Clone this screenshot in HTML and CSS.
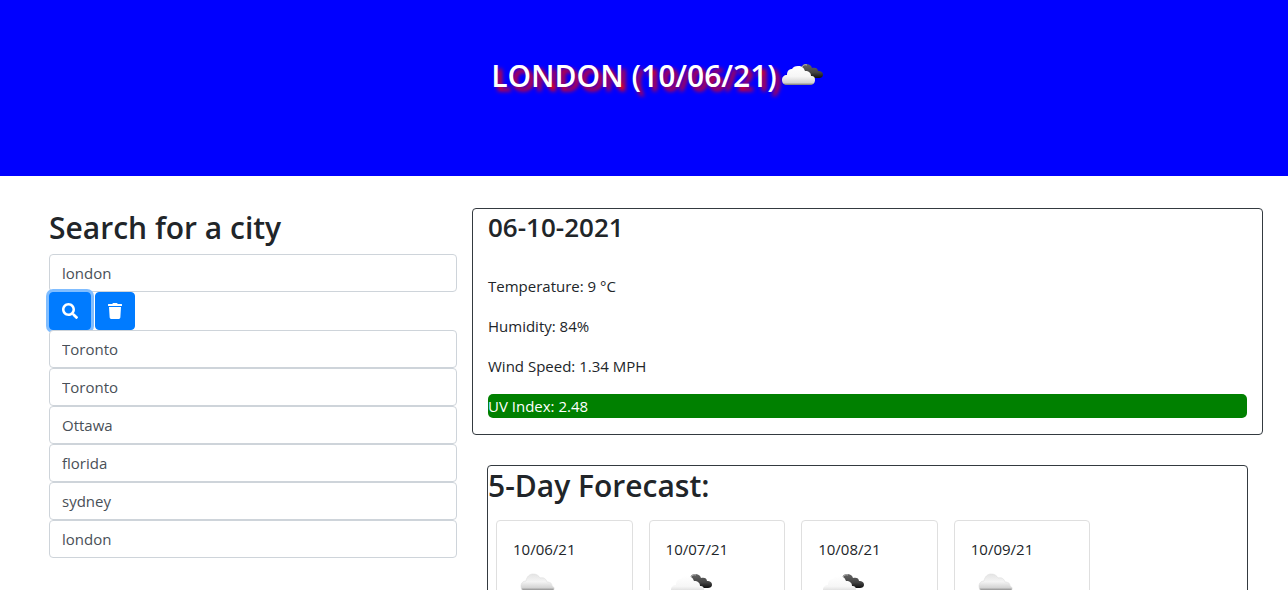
FILE: index.html
```html
<!DOCTYPE html>
<html lang="en">
<head>
<meta charset="utf-8">
<title>Weather Dashboard</title>
<link rel="stylesheet" href="styles.css">
</head>
<body>
<svg class="defs" aria-hidden="true">
  <defs>
    <linearGradient id="light" x1="0" y1="0" x2="0" y2="1"><stop offset="0" stop-color="#fff"/><stop offset=".55" stop-color="#f6f6f6"/><stop offset=".88" stop-color="#d2d2d2"/><stop offset="1" stop-color="#777"/></linearGradient>
    <linearGradient id="dark" x1="0" y1="0" x2="0" y2="1"><stop offset="0" stop-color="#666"/><stop offset=".6" stop-color="#444"/><stop offset="1" stop-color="#111"/></linearGradient>
    <linearGradient id="grey" x1="0" y1="0" x2="0" y2="1"><stop offset="0" stop-color="#e4e4e4"/><stop offset=".45" stop-color="#f4f4f4"/><stop offset=".8" stop-color="#d4d4d4"/><stop offset="1" stop-color="#777"/></linearGradient>
    <symbol id="broken" viewBox="0 0 50 50">
      <path d="M24 19c0-4 2-6 5-6 3 0 5 1 6 4 3-1 6 0 6 3 3 0 5 1 5 4 0 2-2 3-4 3H32z" fill="url(#dark)"/>
      <path d="M24 18c1-3 3-5 6-4" fill="none" stroke="#bbb"/>
      <path d="M10 34c-3 0-5-2-5-5s2-5 5-5c0-4 2-6 5-6 1-2 3-3 6-3 4 0 6 2 7 5 4 0 6 2 6 5 3 0 4 1 4 4s-2 5-5 5z" fill="url(#light)"/>
    </symbol>
    <symbol id="cloud" viewBox="0 0 50 50">
      <path d="M12 30c-3 0-4-2-4-5s2-5 5-5c1-5 4-7 7-7 4 0 6 2 7 4 4-1 6 1 7 4 4 0 5 2 5 4 3 1 3 5-1 5z" fill="url(#grey)" stroke="#ddd" stroke-width=".6"/>
    </symbol>
  </defs>
</svg>
<header class="banner">
  <h1 class="banner-title">LONDON (10/06/21)</h1>
  <svg class="weather-icon" role="img" aria-label="Broken clouds"><use href="#broken"/></svg>
</header>
<main class="dashboard">
  <form class="search">
    <h2 class="heading"><label for="city">Search for a city</label></h2>
    <input class="field" id="city" type="text" value="london">
    <div class="actions">
      <button class="btn btn-active" type="button" aria-label="Search"><svg width="16" height="16" viewBox="0 0 512 512" fill="currentColor"><path d="M505 442.700 405.300 343c-4.500-4.500-10.600-7-17-7H372c27.600-35.300 44-79.700 44-128C416 93.100 322.900 0 208 0S0 93.100 0 208s93.100 208 208 208c48.300 0 92.700-16.400 128-44v16.300c0 6.400 2.500 12.500 7 17l99.700 99.700c9.400 9.400 24.600 9.400 33.900 0l28.300-28.300c9.400-9.400 9.400-24.600.1-34zM208 336c-70.700 0-128-57.200-128-128 0-70.700 57.200-128 128-128 70.700 0 128 57.200 128 128 0 70.700-57.200 128-128 128z"/></svg></button>
      <button class="btn" type="button" aria-label="Clear history"><svg width="14" height="16" viewBox="0 0 448 512" fill="currentColor"><path d="M432 32H312l-9-19A24 24 0 0 0 281 0H167a24 24 0 0 0-22 13l-9 19H16A16 16 0 0 0 0 48v32a16 16 0 0 0 16 16h416a16 16 0 0 0 16-16V48a16 16 0 0 0-16-16zM53 467a48 48 0 0 0 48 45h246a48 48 0 0 0 48-45l21-339H32z"/></svg></button>
    </div>
    <input class="field" type="text" aria-label="History 1" value="Toronto" readonly>
    <input class="field" type="text" aria-label="History 2" value="Toronto" readonly>
    <input class="field" type="text" aria-label="History 3" value="Ottawa" readonly>
    <input class="field" type="text" aria-label="History 4" value="florida" readonly>
    <input class="field" type="text" aria-label="History 5" value="sydney" readonly>
    <input class="field" type="text" aria-label="History 6" value="london" readonly>
  </form>
  <div class="results">
    <section class="current">
      <h3 class="date">06-10-2021</h3>
      <p class="reading">Temperature: 9 °C</p>
      <p class="reading">Humidity: 84%</p>
      <p class="reading">Wind Speed: 1.34 MPH</p>
      <p class="reading uv">UV Index: 2.48</p>
    </section>
    <section class="forecast">
      <h2 class="heading">5-Day Forecast:</h2>
      <div class="cards">
        <article class="card"><p class="day">10/06/21</p><svg class="weather-icon" role="img" aria-label="Cloudy"><use href="#cloud"/></svg></article>
        <article class="card"><p class="day">10/07/21</p><svg class="weather-icon" role="img" aria-label="Broken clouds"><use href="#broken"/></svg></article>
        <article class="card"><p class="day">10/08/21</p><svg class="weather-icon" role="img" aria-label="Broken clouds"><use href="#broken"/></svg></article>
        <article class="card"><p class="day">10/09/21</p><svg class="weather-icon" role="img" aria-label="Cloudy"><use href="#cloud"/></svg></article>
      </div>
    </section>
  </div>
</main>
</body>
</html>
```
FILE: styles.css
```css
* { box-sizing: border-box; }
body {
  margin: 0;
  height: 100vh;
  overflow: hidden;
  background: #fff;
  color: #212529;
  font: 400 15px/24px "Segoe UI", "Open Sans", "Noto Sans", sans-serif;
}
h1, h2, h3, p { margin: 0; }
.defs { position: absolute; width: 0; height: 0; }
.banner {
  display: flex;
  justify-content: center;
  align-items: center;
  padding: 51px 0 75px 30px;
  background: #00f;
  color: #fff;
}
.banner-title { font-size: 30px; line-height: 50px; font-weight: 600; text-shadow: 4px 4px 4px #f00; }
.weather-icon { display: block; width: 50px; height: 50px; }
.dashboard {
  display: grid;
  grid-template-columns: 423fr 791fr;
  padding: 32px 25px 0 49px;
}
.search { display: flex; flex-direction: column; padding-right: 15px; }
.heading { font-size: 30px; line-height: 38px; font-weight: 600; margin: 1px 0 7px; }
.field {
  width: 100%;
  height: 38px;
  padding: 6px 12px;
  border: 1px solid #ced4da;
  border-radius: 4px;
  background: #fff;
  color: #495057;
  font: inherit;
}
.actions { display: flex; gap: 4px; }
.btn {
  height: 38px;
  padding: 0 12px;
  border: 1px solid #007bff;
  border-radius: 4px;
  background: #007bff;
  color: #fff;
}
.btn svg { display: block; }
.btn-active { box-shadow: 0 0 0 3px #80bdff; }
.current { padding: 0 15px 16px; border: 1px solid #343a40; border-radius: 4px; }
.date { font-size: 26px; line-height: 34px; font-weight: 600; margin: 1px 0 30px; }
.reading { margin-top: 16px; }
.uv { background: green; color: #fff; border-radius: 5px; }
.forecast { margin: 30px 15px 0; border: 1px solid #343a40; border-radius: 4px; }
.cards {
  display: grid;
  grid-template-columns: repeat(5, 1fr);
  gap: 16px;
  padding: 8px 4px 8px 8px;
}
.card { padding: 16px; border: 1px solid #dfdfdf; border-radius: 4px; }
```
